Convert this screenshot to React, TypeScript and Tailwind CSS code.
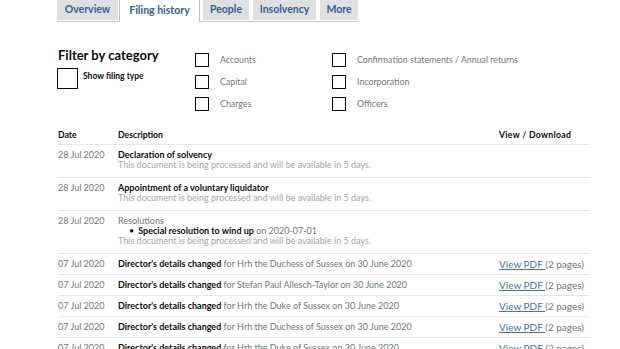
import React from "react";

const font = { fontFamily: "Lato, 'Open Sans', sans-serif" };

function Box({ size = 14 }: { size?: number }) {
  return (
    <div
      className="shrink-0 border-[1.5px] border-[#0b0c0c] bg-white"
      style={{ width: size, height: size }}
    />
  );
}

const tabs: { t: string; w: number; active?: boolean }[] = [
  { t: "Overview", w: 61 },
  { t: "Filing history", w: 81, active: true },
  { t: "People", w: 46 },
  { t: "Insolvency", w: 63 },
  { t: "More", w: 38 },
];

type Row = {
  date: string;
  title?: string;
  plain?: string;
  bullet?: boolean;
  rest?: string;
  processing?: boolean;
  pdf?: boolean;
};

const rows: Row[] = [
  { date: "28 Jul 2020", title: "Declaration of solvency", processing: true },
  { date: "28 Jul 2020", title: "Appointment of a voluntary liquidator", processing: true },
  { date: "28 Jul 2020", plain: "Resolutions", bullet: true, processing: true },
  { date: "07 Jul 2020", title: "Director's details changed", rest: " for Hrh the Duchess of Sussex on 30 June 2020", pdf: true },
  { date: "07 Jul 2020", title: "Director's details changed", rest: " for Stefan Paul Allesch-Taylor on 30 June 2020", pdf: true },
  { date: "07 Jul 2020", title: "Director's details changed", rest: " for Hrh the Duke of Sussex on 30 June 2020", pdf: true },
  { date: "07 Jul 2020", title: "Director's details changed", rest: " for Hrh the Duchess of Sussex on 30 June 2020", pdf: true },
  { date: "07 Jul 2020", title: "Director's details changed", rest: " for Hrh the Duke of Sussex on 30 June 2020", pdf: true },
];

export default function App() {
  return (
    <div className="w-[620px] h-[349px] overflow-hidden bg-white" style={font}>
      {/* Tabs */}
      <div className="ml-[57px] w-[301px] flex items-end border-b border-[#bfc1c3] h-[22px]">
        {tabs.map((tab, i) =>
          tab.active ? (
            <div
              key={tab.t}
              style={{ width: tab.w }}
              className="ml-[1px] h-[23px] -mb-px flex items-center justify-center bg-white border-l border-r border-[#bfc1c3] text-[10.5px] font-bold text-[#2f5f93]"
            >
              {tab.t}
            </div>
          ) : (
            <div
              key={tab.t}
              style={{ width: tab.w, marginLeft: i === 0 ? 0 : i === 2 ? 3 : 4 }}
              className="h-[21px] flex items-center justify-center bg-[#dee0e2] text-[10.5px] font-bold text-[#2f5f93] mb-[1px]"
            >
              {tab.t}
            </div>
          )
        )}
      </div>

      {/* Filter */}
      <div className="ml-[58px] mt-[25px] flex">
        <div className="w-[137px]">
          <div className="text-[13px] font-bold text-[#0b0c0c] leading-[14px] mt-[1px]">Filter by category</div>
          <div className="flex items-start gap-[5px] mt-[6px] -ml-[1px]">
            <Box size={21} />
            <div className="text-[8.5px] font-bold text-[#0b0c0c] leading-[10px] mt-[3px]">Show filing type</div>
          </div>
        </div>
        <div className="w-[137px] flex flex-col gap-[8px] mt-[6px]">
          {["Accounts", "Capital", "Charges"].map((l) => (
            <div key={l} className="flex items-center gap-[11px] h-[14px]">
              <Box />
              <span className="text-[8.8px] text-[#6f777b]">{l}</span>
            </div>
          ))}
        </div>
        <div className="flex flex-col gap-[8px] mt-[6px]">
          {["Confirmation statements / Annual returns", "Incorporation", "Officers"].map((l) => (
            <div key={l} className="flex items-center gap-[11px] h-[14px]">
              <Box />
              <span className="text-[8.8px] text-[#6f777b]">{l}</span>
            </div>
          ))}
        </div>
      </div>

      {/* Table */}
      <div className="ml-[58px] w-[532px] mt-[14px]">
        <div className="flex items-center h-[20px] border-b border-[#e5e6e7] text-[8.7px] font-bold text-[#0b0c0c]">
          <div className="w-[60px]">Date</div>
          <div className="flex-1">Description</div>
          <div className="w-[91px] tracking-[0.3px]">View / Download</div>
        </div>
        {rows.map((r, i) => (
          <div
            key={i}
            className={`flex text-[9px] leading-[10px] border-b border-[#e5e6e7] pt-[5px] ${r.processing ? "pb-[7px]" : "pb-[5px]"}`}
          >
            <div className="w-[60px] text-[#6f777b]">{r.date}</div>
            <div className="flex-1">
              {r.title && <span className="font-bold text-[#0b0c0c]">{r.title}</span>}
              {r.rest && <span className="text-[#6f777b]">{r.rest}</span>}
              {r.plain && <div className="text-[#6f777b]">{r.plain}</div>}
              {r.bullet && (
                <div className="pl-[11px] flex">
                  <span className="text-[#0b0c0c] mr-[4px]">•</span>
                  <span>
                    <span className="font-bold text-[#0b0c0c]">Special resolution to wind up</span>
                    <span className="text-[#6f777b]"> on 2020-07-01</span>
                  </span>
                </div>
              )}
              {r.processing && (
                <div className="text-[#a1a5a8]">This document is being processed and will be available in 5 days.</div>
              )}
            </div>
            <div className="w-[91px] text-[10px] whitespace-nowrap">
              {r.pdf && (
                <span>
                  <span className="text-[#4c6fa5] underline">View PDF </span>
                  <span className="text-[#6f777b]">(2 pages)</span>
                </span>
              )}
            </div>
          </div>
        ))}
      </div>
    </div>
  );
}
